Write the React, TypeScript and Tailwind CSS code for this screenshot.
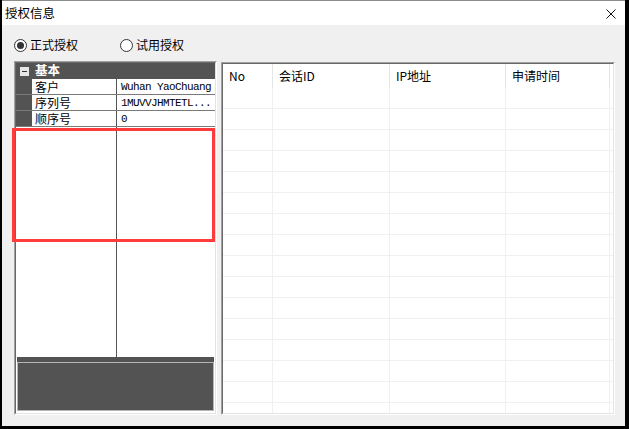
import React from 'react';

const props = [
  { name: '客户', value: 'Wuhan YaoChuang' },
  { name: '序列号', value: '1MUVVJHMTETL...' },
  { name: '顺序号', value: '0' },
];

const columns = [
  { label: 'No', width: 'w-[50px]' },
  { label: '会话ID', width: 'w-[117px]' },
  { label: 'IP地址', width: 'w-[116px]' },
  { label: '申请时间', width: 'w-[104px]' },
];

function Radio({ checked, label }: { checked?: boolean; label: string }) {
  return (
    <label className="flex items-center gap-[3px]">
      <span className="flex h-[13px] w-[13px] items-center justify-center rounded-full border border-[#333333] bg-white">
        {checked && <span className="h-[7px] w-[7px] rounded-full bg-[#333333]" />}
      </span>
      <span className="text-[12px] leading-[14px] text-black">{label}</span>
    </label>
  );
}

function PropertyGrid() {
  return (
    <div className="h-[354px] w-[203px] border border-t-[#a0a0a0] border-l-[#a0a0a0] border-r-white border-b-white">
      <div className="flex h-full flex-col border border-t-[#696969] border-l-[#696969] border-r-[#e3e3e3] border-b-[#e3e3e3] bg-white">
        <div className="flex h-[16px] shrink-0 items-center bg-[#535353]">
          <span className="ml-[4px] flex h-[9px] w-[9px] items-center justify-center bg-[#e6e6e6]">
            <span className="h-[1px] w-[5px] bg-[#333333]" />
          </span>
          <span className="relative -top-[1px] ml-[6px] text-[12.5px] font-bold leading-[12px] text-white">
            基本
          </span>
        </div>
        {props.map((p) => (
          <div key={p.name} className="flex h-[16px] shrink-0 border-b border-[#7a7a7a]">
            <div className="w-[16px] bg-[#535353]" />
            <div className="flex w-[85px] items-center overflow-hidden border-r border-[#555555] pl-[3px] text-[12px] leading-[12px] text-black">
              {p.name}
            </div>
            <div className="flex flex-1 items-center overflow-hidden whitespace-nowrap pl-[4px] font-['Liberation_Mono'] text-[11px] leading-[12px] tracking-[-0.6px] text-black">
              {p.value}
            </div>
          </div>
        ))}
        <div className="flex flex-1">
          <div className="w-[101px] border-r border-[#555555]" />
        </div>
        <div className="h-[56px] shrink-0 px-[1px] pb-[2px]">
          <div className="h-[5px] bg-[#535353]" />
          <div className="h-[49px] border border-[#b5b5b5] bg-[#535353]" />
        </div>
      </div>
    </div>
  );
}

function SessionList() {
  const rows = Array.from({ length: 16 }, (_, i) => i);
  return (
    <div className="mt-[1px] h-[353px] w-[394px] border border-t-[#a0a0a0] border-l-[#a0a0a0] border-r-white border-b-white">
      <div className="flex h-full flex-col overflow-hidden border border-t-[#696969] border-l-[#696969] border-r-[#e3e3e3] border-b-[#e3e3e3] bg-white">
        <div className="flex h-[24px] shrink-0">
          {columns.map((c) => (
            <div
              key={c.label}
              className={`${c.width} border-r border-[#e5e5e5] pl-[6px] text-[12px] leading-[24px] text-black`}
            >
              {c.label}
            </div>
          ))}
        </div>
        {rows.map((r) => (
          <div key={r} className="flex h-[21px] shrink-0 border-b border-[#f0f0f0]">
            {columns.map((c) => (
              <div key={c.label} className={`${c.width} border-r border-[#f0f0f0]`} />
            ))}
          </div>
        ))}
      </div>
    </div>
  );
}

export default function App() {
  return (
    <div className="relative h-[429px] w-[629px] overflow-hidden bg-black font-['Noto_Sans_CJK_SC',sans-serif]">
      <div className="ml-[2px] flex h-[426px] w-[623px] flex-col border-t border-[#8c8c8c] bg-[#f0f0f0]">
        <div className="flex h-[24px] items-center justify-between bg-white pl-[3px] pr-[9px]">
          <span className="text-[12.5px] text-black">授权信息</span>
          <svg width="10" height="10" viewBox="0 0 10 10" className="mt-[1px]">
            <path d="M0.5 0.5 L9.5 9.5 M9.5 0.5 L0.5 9.5" stroke="#111" strokeWidth="1" />
          </svg>
        </div>
        <div className="flex items-center gap-[42px] pl-[12px] pt-[13px]">
          <Radio checked label="正式授权" />
          <Radio label="试用授权" />
        </div>
        <div className="mt-[9px] flex items-start gap-[4px] pl-[12px]">
          <PropertyGrid />
          <SessionList />
        </div>
      </div>
      <div className="absolute left-[12px] top-[128px] h-[114px] w-[203px] border-[3px] border-[#ff3b3b]" />
    </div>
  );
}
